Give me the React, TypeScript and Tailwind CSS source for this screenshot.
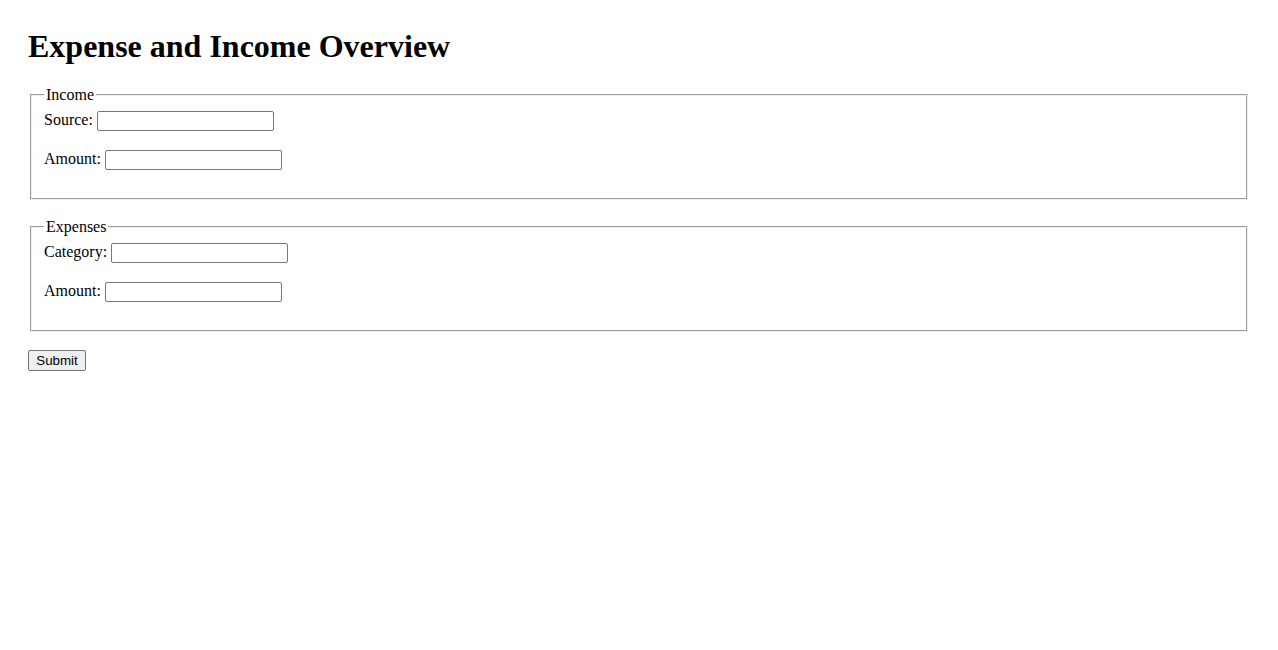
export default function App() {
  const input =
    "w-[177px] h-[20px] align-baseline border border-[#767676] rounded-[2px] px-[2px] py-[1px] bg-white text-[13.33px] font-['Liberation_Sans',sans-serif]";
  const fs =
    "mx-[2px] border-2 border-[#f0f0f0] [border-style:groove] px-[12px] pt-[4px] pb-[12px]";
  return (
    <div className="min-h-[650px] bg-white p-[28px] font-['Liberation_Serif',serif] text-[16px] text-black">
      <h1 className="m-0 mb-[21px] text-[32px] font-bold leading-[37px]">Expense and Income Overview</h1>
      <form>
        <fieldset className={`${fs} mb-[18px]`}>
          <legend className="px-[2px] leading-[18px]">Income</legend>
          <div className="mb-4 leading-[23px]">
            <label>Source:</label> <input type="text" className={input} />
          </div>
          <div className="mb-4 leading-[23px]">
            <label>Amount:</label> <input type="text" className={input} />
          </div>
        </fieldset>
        <fieldset className={`${fs} mb-[18px]`}>
          <legend className="px-[2px] leading-[18px]">Expenses</legend>
          <div className="mb-4 leading-[23px]">
            <label>Category:</label> <input type="text" className={input} />
          </div>
          <div className="mb-4 leading-[23px]">
            <label>Amount:</label> <input type="text" className={input} />
          </div>
        </fieldset>
        <button
          type="submit"
          className="block h-[21px] w-[58px] border border-[#767676] rounded-[2px] bg-[#efefef] text-[13.33px] leading-[15px] font-['Liberation_Sans',sans-serif] text-black"
        >
          Submit
        </button>
      </form>
    </div>
  );
}
